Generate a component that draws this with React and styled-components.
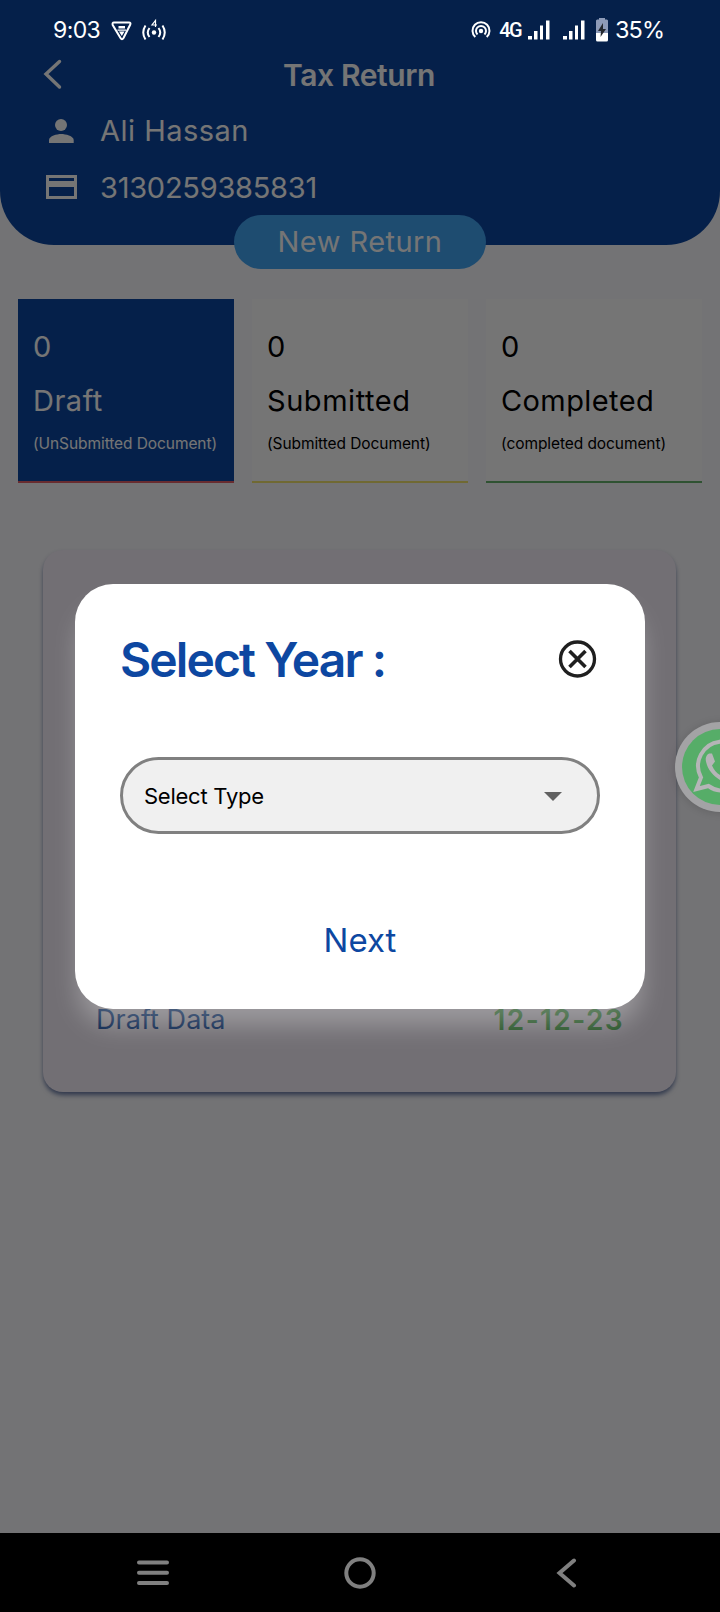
import React from 'react';
import styled, { createGlobalStyle } from 'styled-components';

const Global = createGlobalStyle`
  * { box-sizing: border-box; }
  html, body { margin: 0; padding: 0; }
  body { font-family: Inter, "Liberation Sans", sans-serif; background: #000; }
`;

const Screen = styled.div`
  position: relative;
  width: 720px;
  height: 1612px;
  overflow: hidden;
  display: flex;
  flex-direction: column;
  background: #fafafe;
`;

const Text = styled.span`
  font-family: ${(p) => p.$family || 'inherit'};
  font-size: ${(p) => p.$size}px;
  font-weight: ${(p) => p.$weight || 400};
  line-height: ${(p) => p.$line || 40}px;
  letter-spacing: ${(p) => p.$track || 0}px;
  color: ${(p) => p.$color || 'inherit'};
  white-space: nowrap;
`;

const Header = styled.header`
  height: 245px;
  flex: none;
  padding-top: 54px;
  background: #0d47a1;
  border-radius: 0 0 54px 54px;
  color: #fff;
  display: flex;
  flex-direction: column;
`;

const TitleRow = styled.div`
  height: 42px;
  margin-bottom: 6px;
  display: grid;
  grid-template-columns: 106px 1fr 108px;
  align-items: center;
  justify-items: center;
`;

const InfoRow = styled.div`
  height: 57px;
  padding-left: 40px;
  display: flex;
  align-items: center;
  gap: 18px;
  svg { flex: none; }
`;

const PillRow = styled.div`
  display: flex;
  justify-content: center;
  height: 54px;
  margin-top: -30px;
  flex: none;
`;

const Pill = styled.button`
  width: 252px;
  height: 54px;
  border: 0;
  border-radius: 27px;
  padding: 0;
  background: #42a5f5;
  color: #fff;
  font-family: inherit;
`;

const Stats = styled.section`
  display: grid;
  grid-template-columns: repeat(3, 216px);
  gap: 18px;
  padding: 30px 18px 0;
`;

const Stat = styled.article`
  height: 184px;
  padding: 27px 0 0 15px;
  display: flex;
  flex-direction: column;
  background: ${(p) => (p.$active ? '#0d47a1' : '#fff')};
  color: ${(p) => (p.$active ? '#fff' : '#000')};
  border-bottom: 2px solid ${(p) => p.$line};
`;

const DataCard = styled.section`
  margin: 67px 44px 0 43px;
  height: 542px;
  padding: 0 52px 52px 53px;
  border-radius: 20px;
  background: #f8f1fc;
  box-shadow: 0 4px 5px -1px rgba(13, 40, 110, 0.55), 0 2px 4px rgba(13, 40, 110, 0.15);
  display: flex;
  align-items: flex-end;
  justify-content: space-between;
`;

const Overlay = styled.div`
  position: absolute;
  inset: 0;
  background: rgba(0, 0, 0, 0.54);
`;

const StatusBar = styled.div`
  position: absolute;
  inset: 0 0 auto 0;
  height: 60px;
  padding: 0 56px 0 53px;
  display: flex;
  justify-content: space-between;
  align-items: center;
  color: #fff;
`;

const StatusGroup = styled.div`
  display: flex;
  align-items: center;
  svg { flex: none; }
`;

const Dialog = styled.div`
  position: absolute;
  left: 75px;
  top: 584px;
  width: 570px;
  height: 425px;
  border-radius: 38px;
  padding: 43px 45px 0;
  background: #fff;
  display: flex;
  flex-direction: column;
  box-shadow: 0 20px 26px -4px rgba(255, 255, 255, 0.3);
`;

const DialogHead = styled.div`
  height: 64px;
  display: flex;
  align-items: center;
  justify-content: space-between;
  color: #0d47a1;
`;

const Select = styled.div`
  margin-top: 66px;
  height: 77px;
  border: 3px solid #808080;
  border-radius: 39px;
  background: #f0f0f0;
  padding: 0 35px 0 21px;
  display: flex;
  align-items: center;
  justify-content: space-between;
  svg { margin-top: 2px; }
`;

const NextButton = styled.button`
  margin-top: 76px;
  height: 60px;
  padding: 0;
  border: 0;
  background: none;
  font-family: inherit;
  color: #0d47a1;
`;

const Chat = styled.div`
  position: absolute;
  left: 675px;
  top: 722px;
  width: 90px;
  height: 90px;
  border-radius: 45px;
  padding: 7px;
  background: #a3a3a5;
  box-shadow: 0 1px 8px rgba(0, 0, 0, 0.14);
`;

const NavBar = styled.nav`
  position: absolute;
  inset: auto 0 0 0;
  height: 79px;
  padding: 0 137px 0 136px;
  background: #000;
  display: flex;
  align-items: center;
  justify-content: space-between;
`;

const Gap = styled.i`
  width: ${(p) => p.$w}px;
  flex: none;
`;

const Signal = () => (
  <svg width="22" height="20" viewBox="0 0 22 20" fill="#fff">
    <path d="M0 16h4v3.500H0zM6 11h3.500v8.500H6zM12 5.500h3v14h-3zM18 0.500h3.500v19H18z" />
  </svg>
);

const stats = [
  { label: 'Draft', note: '(UnSubmitted Document)', line: '#e2606a', active: true, track: 0.5 },
  { label: 'Submitted', note: '(Submitted Document)', line: '#f5e470', track: 0.55 },
  { label: 'Completed', note: '(completed document)', line: '#68b36d', track: 0.4 },
];

export default function App() {
  return (
    <Screen>
      <Global />
      <Header>
        <TitleRow>
          <svg width="106" height="42" viewBox="0 0 106 42" fill="none" stroke="#fff" strokeWidth="3.400" strokeLinecap="round">
            <path d="M59.500 7.500L46 20L59.500 33" />
          </svg>
          <Text $size={30} $weight={600} $track={-0.4}>Tax Return</Text>
        </TitleRow>
        <InfoRow>
          <svg width="42" height="42" viewBox="0 0 42 42" fill="#fff">
            <circle cx="21" cy="15" r="6" />
            <path d="M9 33v-3c0-4 8-6 12.200-6s12.500 2 12.500 6v3z" />
          </svg>
          <Text $size={29} $track={0.48}>Ali Hassan</Text>
        </InfoRow>
        <InfoRow>
          <svg width="42" height="42" viewBox="0 0 42 42">
            <path fill="#fff" fillRule="evenodd" d="M6 8h31v24H6zM9 11v3h25v-3zM9 20v9h25v-9z" />
          </svg>
          <Text $size={29} $track={-0.26}>3130259385831</Text>
        </InfoRow>
      </Header>
      <PillRow>
        <Pill><Text $size={29} $track={0.45}>New Return</Text></Pill>
      </PillRow>
      <Stats>
        {stats.map((s) => (
          <Stat key={s.label} $active={s.active} $line={s.line}>
            <Text $size={29} $line={42}>0</Text>
            <Text $size={29} $line={66} $track={s.track}>{s.label}</Text>
            <Text $size={15.5} $line={20} $track={-0.08}>{s.note}</Text>
          </Stat>
        ))}
      </Stats>
      <DataCard>
        <Text $size={27} $track={0.05} $color="#0d47a1">Draft Data</Text>
        <Text $size={28} $weight={600} $track={1.4} $color="#4caf50">12-12-23</Text>
      </DataCard>

      <Overlay />

      <Dialog>
        <DialogHead>
          <Text $size={48} $weight={600} $track={-1.9} $line={67}>Select Year :</Text>
          <svg width="44" height="44" viewBox="0 0 44 44" fill="none" stroke="#1f1f1f" strokeWidth="3.300">
            <circle cx="21.500" cy="22" r="17" />
            <path d="M13.500 14l16 16M29.500 14L13.500 30" strokeWidth="3.600" />
          </svg>
        </DialogHead>
        <Select>
          <Text $size={22} $track={-0.25}>Select Type</Text>
          <svg width="18" height="9" viewBox="0 0 18 9"><path d="M0 0h18l-9 9z" fill="#616161" /></svg>
        </Select>
        <NextButton><Text $size={33}>Next</Text></NextButton>
      </Dialog>

      <Chat>
        <svg width="76" height="76" viewBox="0 0 76 76">
          <circle cx="38" cy="38" r="38" fill="#56ad68" />
          <path d="M14.500 60L19 48.500A24.500 24.500 0 1 1 26.500 57z" fill="none" stroke="#b5b5b7" strokeWidth="4" />
          <path d="M28 24.500c-3 0-5 4-4 8 2 10 11 19 21 21 4 1 8-2 8-6l-8-4-4 4c-5-2-9-6-11-11l3-4-3-8z" fill="#b5b5b7" />
        </svg>
      </Chat>

      <StatusBar>
        <StatusGroup>
          <Text $size={23} $track={-0.6}>9:03</Text>
          <Gap $w={11} />
          <svg width="22" height="22" viewBox="0 0 22 22" fill="none" stroke="#fff" strokeWidth="2">
            <path d="M3 3.500h15q2 0 1.300 2L12.500 19q-1.500 2.500-3 0L1.700 6Q1 3.500 3 3.500z" />
            <path d="M7.500 7h6.500v2.500H7.500zM6.500 10.500h8.500v1.200H6.500zM8 12.500h5.500l-2.700 4.500z" fill="#fff" stroke="none" />
          </svg>
          <Gap $w={9} />
          <svg width="24" height="24" viewBox="0 0 24 24" fill="none" stroke="#fff" strokeWidth="2">
            <circle cx="12" cy="14.500" r="2.200" fill="#fff" stroke="none" />
            <path d="M7.500 10q-3.500 4.500 0 9M16.500 10q3.500 4.500 0 9M3.500 7.500q-4.500 7 0 14M20.500 7.500q4.500 7 0 14" />
            <path d="M13.500 9V2.500L10 7h5" strokeWidth="1.200" />
          </svg>
        </StatusGroup>
        <StatusGroup>
          <svg width="20" height="20" viewBox="0 0 20 20" fill="none" stroke="#fff" strokeWidth="2">
            <circle cx="10" cy="11" r="2.200" fill="#fff" stroke="none" />
            <path d="M4.300 17A8.500 8.500 0 1 1 15.700 17M6.500 14.500A5 5 0 1 1 13.500 14.500" />
          </svg>
          <Gap $w={8} />
          <Text $family="Roboto, sans-serif" $size={20} $weight={500} $track={-1.6}>4G</Text>
          <Gap $w={7} />
          <Signal />
          <Gap $w={13} />
          <Signal />
          <Gap $w={11} />
          <svg width="12" height="24" viewBox="0 0 12 24">
            <path d="M3 0h6v1.500h2l1 1V15H0V2.500l1-1h2z" fill="#8e9bb8" />
            <path d="M0 15h12v7q0 1.500-1.500 1.500h-9Q0 23.500 0 22z" fill="#fff" />
            <path d="M7 5L2 13h3l-.500 6L10 11H7z" fill="#24282f" />
          </svg>
          <Gap $w={7} />
          <Text $size={23.5} $track={-1} $line={42}>35%</Text>
        </StatusGroup>
      </StatusBar>

      <NavBar>
        <svg width="34" height="28" viewBox="0 0 34 28" stroke="#808080" strokeWidth="4" strokeLinecap="round">
          <path d="M3 3.500h28M3 13.800h28M3 24h28" />
        </svg>
        <svg width="32" height="32" viewBox="0 0 32 32" fill="none" stroke="#808080" strokeWidth="4">
          <circle cx="16" cy="16" r="13.700" />
        </svg>
        <svg width="33" height="30" viewBox="-7 0 33 30" fill="none" stroke="#808080" strokeWidth="4" strokeLinecap="round">
          <path d="M17 2.500L2.500 15L17 27.500" />
        </svg>
      </NavBar>
    </Screen>
  );
}
